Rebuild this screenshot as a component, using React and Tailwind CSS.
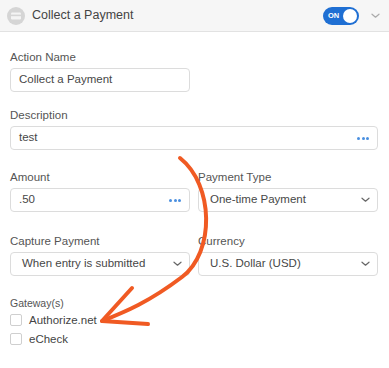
import React from 'react';

const font = { fontFamily: '"Liberation Sans", Arial, sans-serif' };

const Dots = () => (
  <span className="flex items-center gap-[1.5px]">
    <span className="w-[3px] h-[3px] rounded-full bg-[#4a8fe0]" />
    <span className="w-[3px] h-[3px] rounded-full bg-[#4a8fe0]" />
    <span className="w-[3px] h-[3px] rounded-full bg-[#4a8fe0]" />
  </span>
);

const Chevron = ({ color = '#666' }) => (
  <svg width="9" height="6" viewBox="0 0 9 6" fill="none">
    <path d="M1 1.2l3.5 3L8 1.2" stroke={color} strokeWidth="1.2" strokeLinecap="round" strokeLinejoin="round" />
  </svg>
);

const Label = ({ children }) => (
  <div className="text-[11.5px] leading-[14px] text-[#555] mb-[4px]">{children}</div>
);

const Box = ({ children, className = '' }) => (
  <div className={`h-[24px] border border-[#dcdcdc] rounded-[4px] bg-white flex items-center text-[11.5px] text-[#474747] ${className}`}>
    {children}
  </div>
);

export default function App() {
  return (
    <div className="relative w-[389px] h-[368px] bg-white overflow-hidden" style={font}>
      {/* header */}
      <div className="h-[32px] bg-[#f6f6f6] border-b border-[#e2e2e2] flex items-center pl-[7px] pr-[9px]">
        <svg width="18" height="18" viewBox="0 0 18 18">
          <circle cx="9" cy="9" r="9" fill="#d5d5d5" />
          <rect x="4" y="5.5" width="10" height="7" rx="1.2" fill="#f4f4f4" />
          <rect x="4" y="7.6" width="10" height="1.6" fill="#d5d5d5" />
        </svg>
        <span className="ml-[7px] text-[12.5px] text-[#444] font-medium">Collect a Payment</span>
        <div className="ml-auto flex items-center">
          <div className="w-[36px] h-[18px] rounded-full bg-[#1f6fd3] flex items-center justify-between pl-[5px] pr-[2px]">
            <span className="text-[7.5px] font-bold text-white leading-none">ON</span>
            <span className="w-[14px] h-[14px] rounded-full bg-white" />
          </div>
          <span className="ml-[12px]"><Chevron color="#aaa" /></span>
        </div>
      </div>

      {/* form */}
      <div className="pl-[10px] pr-[11px] pt-[18px]">
        <Label>Action Name</Label>
        <Box className="w-[180px] px-[8px]">Collect a Payment</Box>

        <div className="mt-[16px]">
          <Label>Description</Label>
          <Box className="px-[8px] justify-between">
            <span>test</span>
            <Dots />
          </Box>
        </div>

        <div className="mt-[20px] grid grid-cols-2 gap-x-[8px]">
          <div>
            <div className="mb-[1px]"><Label>Amount</Label></div>
            <Box className="px-[8px] justify-between">
              <span>.50</span>
              <Dots />
            </Box>
          </div>
          <div>
            <div className="mb-[1px]"><Label>Payment Type</Label></div>
            <Box className="pl-[11px] pr-[7px] justify-between">
              <span>One-time Payment</span>
              <Chevron />
            </Box>
          </div>
        </div>

        <div className="mt-[22px] grid grid-cols-2 gap-x-[8px]">
          <div>
            <Label>Capture Payment</Label>
            <Box className="pl-[11px] pr-[7px] justify-between">
              <span>When entry is submitted</span>
              <Chevron />
            </Box>
          </div>
          <div>
            <Label>Currency</Label>
            <Box className="pl-[11px] pr-[7px] justify-between">
              <span>U.S. Dollar (USD)</span>
              <Chevron />
            </Box>
          </div>
        </div>

        <div className="mt-[21px] text-[10.5px] leading-[13px] text-[#555]">Gateway(s)</div>
        <div className="mt-[4px] flex flex-col gap-[7px]">
          <label className="flex items-center gap-[7px] text-[11.5px] text-[#444] leading-[12px]">
            <span className="w-[12px] h-[12px] border border-[#cfcfcf] rounded-[2px] bg-white" />
            Authorize.net
          </label>
          <label className="flex items-center gap-[7px] text-[11.5px] text-[#444] leading-[12px]">
            <span className="w-[12px] h-[12px] border border-[#cfcfcf] rounded-[2px] bg-white" />
            eCheck
          </label>
        </div>
      </div>

      {/* annotation arrow */}
      <svg className="absolute inset-0 pointer-events-none" width="389" height="368" viewBox="0 0 389 368" fill="none">
        <path
          d="M180 158 C 214 185, 215 252, 182 277 S 125 312, 102 321"
          stroke="#f05a23"
          strokeWidth="4"
          strokeLinecap="round"
        />
        <path
          d="M132 288 L102 321 L148 324"
          stroke="#f05a23"
          strokeWidth="4"
          strokeLinecap="round"
          strokeLinejoin="round"
        />
      </svg>
    </div>
  );
}
